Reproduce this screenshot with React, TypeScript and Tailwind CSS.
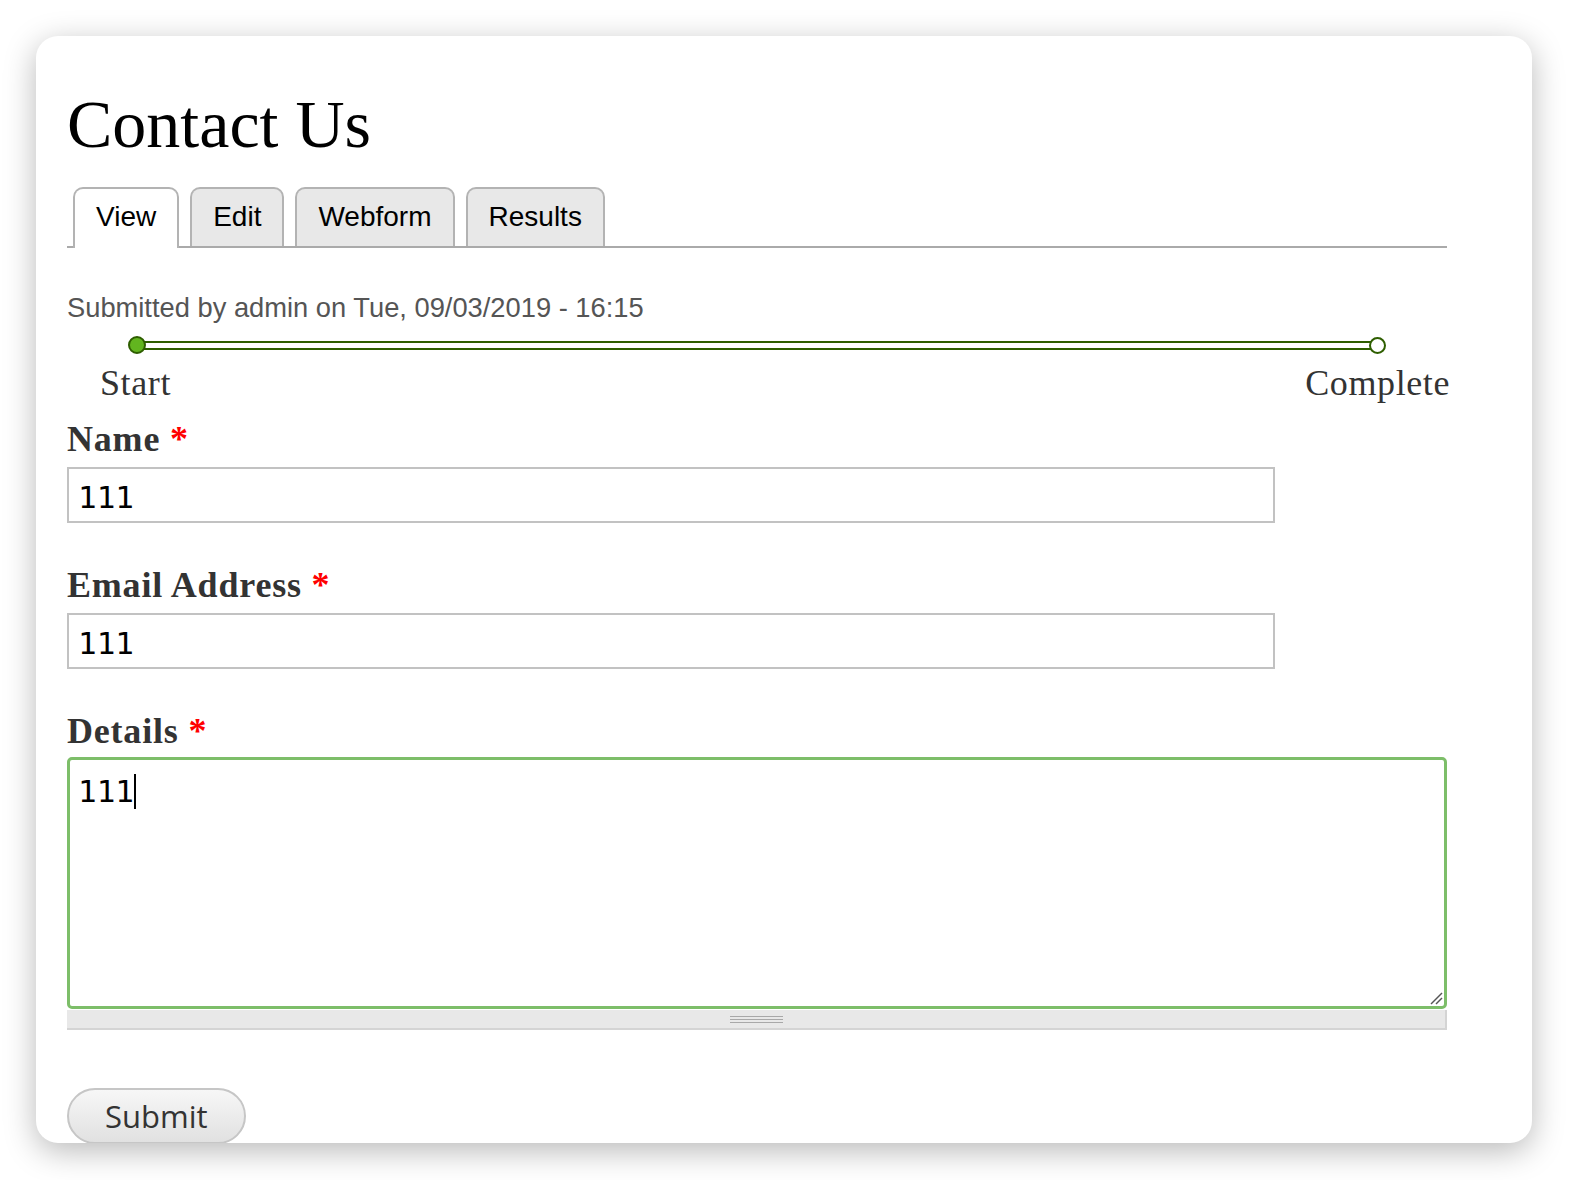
import React from "react";

const serif = "font-['Liberation_Serif',serif]";
const sans = "font-['Liberation_Sans',Arial,sans-serif]";
const mono = "font-['DejaVu_Sans_Mono',monospace]";

function Tab({ label, active }: { label: string; active?: boolean }) {
  return (
    <div
      className={
        active
          ? `${sans} border-2 border-b-0 border-[#b3b3b3] rounded-t-[10px] px-[21px] pt-[14px] pb-[17px] mb-[-2px] text-[28px] leading-[28px] text-black bg-white`
          : `${sans} border-2 border-b-0 border-[#b3b3b3] rounded-t-[10px] px-[21px] pt-[14px] pb-[15px] text-[28px] leading-[28px] text-black bg-[#e8e8e8]`
      }
    >
      {label}
    </div>
  );
}

function Label({ text, className }: { text: string; className?: string }) {
  return (
    <div className={`${serif} text-[36px] leading-[40px] font-bold tracking-[0.8px] text-[#333] ${className ?? ""}`}>
      {text} <span className="text-[#ff0000]">*</span>
    </div>
  );
}

function Input({ value }: { value: string }) {
  return (
    <div
      className={`${mono} mt-[8px] h-[56px] w-[1208px] border-2 border-[#c2c2c2] bg-white px-[9px] pt-[4px] flex items-center text-[31px] leading-[36px] text-black`}
    >
      {value}
    </div>
  );
}

export default function App() {
  return (
    <div className="min-h-[1180px] bg-white pt-[36px] pl-[36px]">
      <div className="w-[1496px] h-[1107px] rounded-[22px] bg-white overflow-hidden shadow-[0_8px_32px_rgba(0,0,0,0.28)] pl-[31px] pt-[54px]">
        <h1 className={`${serif} text-[68px] leading-[68px] text-black`}>Contact Us</h1>

        <div className="mt-[29px] w-[1380px] flex items-end gap-[11px] pl-[6px] border-b-2 border-[#aaaaaa]">
          <Tab label="View" active />
          <Tab label="Edit" />
          <Tab label="Webform" />
          <Tab label="Results" />
        </div>

        <div className={`${sans} mt-[44px] text-[27.3px] leading-[32px] text-[#555]`}>
          Submitted by admin on Tue, 09/03/2019 - 16:15
        </div>

        <div className="mt-[12px] ml-[61px] w-[1258px] h-[18px] flex items-center">
          <div className="w-[18px] h-[18px] rounded-full bg-[#62b51f] border-2 border-[#2e5e00] shrink-0 relative z-10" />
          <div className="flex-1 h-[9px] border-y-2 border-[#2e5e00] bg-white mx-[-2px]" />
          <div className="w-[17px] h-[17px] rounded-full bg-white border-2 border-[#2e5e00] shrink-0 relative z-10" />
        </div>

        <div className={`${serif} mt-[9px] ml-[33px] w-[1350px] flex justify-between text-[36px] leading-[40px] tracking-[0.6px] text-[#333]`}>
          <span>Start</span>
          <span>Complete</span>
        </div>

        <Label text="Name" className="mt-[16px]" />
        <Input value="111" />

        <Label text="Email Address" className="mt-[42px]" />
        <Input value="111" />

        <Label text="Details" className="mt-[42px]" />
        <div className="relative mt-[6px] w-[1380px] h-[252px] border-[3px] border-[#7dbe69] rounded-[5px] bg-white px-[8px] pt-[13px]">
          <div className={`${mono} text-[31px] leading-[36px] text-black flex items-center`}>
            <span>111</span>
            <span className="inline-block w-[2px] h-[35px] bg-black" />
          </div>
          <svg
            className="absolute right-[1px] bottom-[1px]"
            width="14"
            height="14"
            viewBox="0 0 14 14"
          >
            <line x1="2" y1="13" x2="13" y2="2" stroke="#555" strokeWidth="1.4" />
            <line x1="7" y1="13" x2="13" y2="7" stroke="#555" strokeWidth="1.4" />
          </svg>
        </div>
        <div className="mt-[1px] w-[1380px] h-[20px] bg-[#e8e8e8] border-b-2 border-r-2 border-[#d4d4d4] flex items-center justify-center">
          <div className="w-[53px] flex flex-col gap-[2px]">
            <div className="h-[1px] bg-[#a8a8a8]" />
            <div className="h-[1px] bg-[#a8a8a8]" />
            <div className="h-[1px] bg-[#a8a8a8]" />
          </div>
        </div>

        <button
          className="mt-[58px] h-[56px] px-[36px] rounded-full border-2 border-[#c6c6c6] bg-linear-to-b from-[#f7f7f7] to-[#e1e1e1] font-['Open_Sans',sans-serif] text-[31px] leading-[36px] text-[#333]"
        >
          Submit
        </button>
      </div>
    </div>
  );
}
